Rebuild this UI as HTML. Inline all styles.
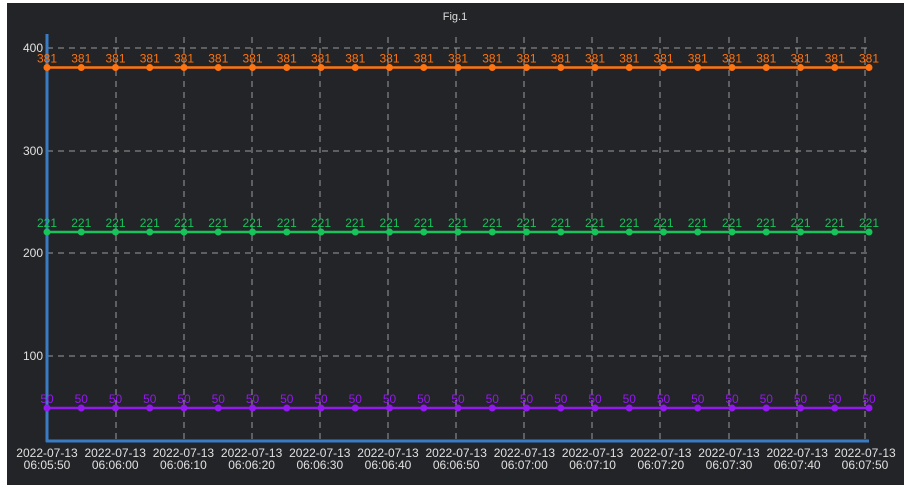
<!DOCTYPE html>
<html><head><style>
html,body{margin:0;padding:0;background:#fff;width:910px;height:490px;overflow:hidden}
svg{display:block;font-family:"Liberation Sans",sans-serif}
</style></head><body>
<svg width="910" height="490" viewBox="0 0 910 490">
<rect x="7" y="3" width="897" height="482" fill="#232427"/>
<text x="455" y="20" fill="#ddd" font-size="11" text-anchor="middle">Fig.1</text>
<g stroke="#9a9a9a" stroke-width="1" stroke-dasharray="6,5" fill="none">
<line x1="47" y1="48" x2="869" y2="48"/>
<line x1="47" y1="151" x2="869" y2="151"/>
<line x1="47" y1="253" x2="869" y2="253"/>
<line x1="47" y1="356" x2="869" y2="356"/>
<line x1="116" y1="37" x2="116" y2="441"/>
<line x1="184" y1="37" x2="184" y2="441"/>
<line x1="252" y1="37" x2="252" y2="441"/>
<line x1="320" y1="37" x2="320" y2="441"/>
<line x1="388" y1="37" x2="388" y2="441"/>
<line x1="456" y1="37" x2="456" y2="441"/>
<line x1="524" y1="37" x2="524" y2="441"/>
<line x1="592" y1="37" x2="592" y2="441"/>
<line x1="660" y1="37" x2="660" y2="441"/>
<line x1="729" y1="37" x2="729" y2="441"/>
<line x1="797" y1="37" x2="797" y2="441"/>
<line x1="865" y1="37" x2="865" y2="441"/>
</g>
<g fill="#e0e0e0" font-size="12" text-anchor="end">
<text x="43" y="52">400</text>
<text x="43" y="155">300</text>
<text x="43" y="257">200</text>
<text x="43" y="360">100</text>
</g>
<line x1="47" y1="34" x2="47" y2="442" stroke="#3a7cc4" stroke-width="3"/>
<line x1="46" y1="441" x2="869" y2="441" stroke="#3a7cc4" stroke-width="3"/>
<g id="lines"></g>
<g fill="#e0e0e0" font-size="12" text-anchor="middle" id="xt"></g>
</svg>
<script>
var ns="http://www.w3.org/2000/svg",g=document.getElementById('lines'),xt=document.getElementById('xt');
function el(t,a,p,txt){var e=document.createElementNS(ns,t);for(var k in a)e.setAttribute(k,a[k]);if(txt)e.textContent=txt;p.appendChild(e);return e;}
[[67.5,'#ff7410','381'],[232,'#16c45a','221'],[408,'#9418f0','50']].forEach(function(s){
el('line',{x1:47,y1:s[0],x2:869,y2:s[0],stroke:s[1],'stroke-width':2.5},g);
for(var i=0;i<25;i++){var x=47+i*34.25;
el('circle',{cx:x,cy:s[0],r:3.5,fill:s[1]},g);
el('text',{x:x,y:s[0]-5,fill:s[1],'font-size':12,'text-anchor':'middle'},g,s[2]);}
});
var times=['06:05:50','06:06:00','06:06:10','06:06:20','06:06:30','06:06:40','06:06:50','06:07:00','06:07:10','06:07:20','06:07:30','06:07:40','06:07:50'];
for(var i=0;i<13;i++){var x=47+i*68.2;if(i==12)x=865;
el('text',{x:x,y:457},xt,'2022-07-13');el('text',{x:x,y:469},xt,times[i]);}
</script>
</body></html>
